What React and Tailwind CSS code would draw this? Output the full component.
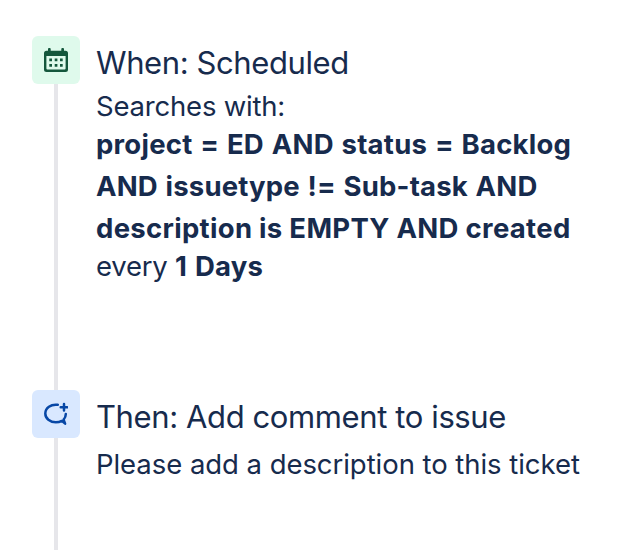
function CalendarIcon() {
  return (
    <svg width="24" height="24" viewBox="0 0 24 24" fill="#14573c">
      <path fillRule="evenodd" d="M4 1a1 1 0 0 1 1-1h.7a1 1 0 0 1 1 1v1.7h10.6V1a1 1 0 0 1 1-1h.7a1 1 0 0 1 1 1v1.7h1.5A2.5 2.5 0 0 1 24 5.2v16.3a2.5 2.5 0 0 1-2.5 2.5h-19A2.5 2.5 0 0 1 0 21.5V5.2a2.5 2.5 0 0 1 2.5-2.5H4zM2.4 8v12.6a1 1 0 0 0 1 1h17.2a1 1 0 0 0 1-1V8z" />
      <path d="M5.3 10.5h2.7v2.7H5.3zM10.7 10.5h2.7v2.7h-2.7zM16 10.5h2.7v2.7H16zM5.3 16h2.7v2.7H5.3zM10.7 16h2.7v2.7h-2.7zM16 16h2.7v2.7H16z" />
    </svg>
  );
}

function CommentIcon() {
  return (
    <svg width="24" height="24" viewBox="0 0 24 24" fill="none" stroke="#0747a6" strokeWidth="2.5" strokeLinecap="round" strokeLinejoin="round">
      <path d="M13.8 2.8C6.8 1.8 1.3 6 1.3 11.5c0 5 4.7 8.8 10.5 8.8 2.2 0 4.3-.5 6-1.4l3.3 2.7-1.5-4c1.4-1.5 2.2-3.4 2.2-5.6" />
      <path d="M20 2v6.6M16.7 5.3h6.6" />
    </svg>
  );
}

export default function App() {
  return (
    <main className="flex h-[550px] w-[618px] flex-col overflow-hidden bg-white pl-8 pt-9 font-['Inter',sans-serif] text-[#172b4d]">
      <section className="flex h-[354px] gap-4">
        <div className="flex w-12 flex-col items-center">
          <div className="flex h-12 w-12 shrink-0 items-center justify-center rounded-md bg-[#dffaec]">
            <CalendarIcon />
          </div>
          <div className="w-1 flex-1 bg-[#e6e6ea]" />
        </div>
        <div className="whitespace-nowrap">
          <h2 className="mt-[7px] text-[31px] leading-[40px] tracking-[-0.4px]">When: Scheduled</h2>
          <p className="mt-[3px] text-[27.5px] leading-[40px] tracking-[-0.2px]">Searches with:</p>
          <p className="-mt-[3px] text-[27.5px] font-bold leading-[42px]">
            <span className="tracking-[0.24px] [word-spacing:1px]">project = ED AND status = Backlog</span><br />
            <span className="tracking-[0.18px] [word-spacing:1px]">AND issuetype != Sub-task AND</span><br />
            <span className="tracking-[0.3px]">description is EMPTY AND created</span>
          </p>
          <p className="-mt-[3px] text-[27.5px] leading-[40px] tracking-[-0.25px]">every <b className="tracking-[0.15px] [word-spacing:1.5px]">1 Days</b></p>
        </div>
      </section>
      <section className="flex flex-1 gap-4">
        <div className="flex w-12 flex-col items-center">
          <div className="flex h-12 w-12 shrink-0 items-center justify-center rounded-md bg-[#d9e8ff]">
            <CommentIcon />
          </div>
          <div className="w-1 flex-1 bg-[#e6e6ea]" />
        </div>
        <div className="whitespace-nowrap">
          <h2 className="mt-[7px] text-[31px] leading-[40px] tracking-[-0.39px]">Then: Add comment to issue</h2>
          <p className="mt-[7px] text-[27.5px] leading-[40px] tracking-[-0.05px]">Please add a description to this ticket</p>
        </div>
      </section>
    </main>
  );
}
